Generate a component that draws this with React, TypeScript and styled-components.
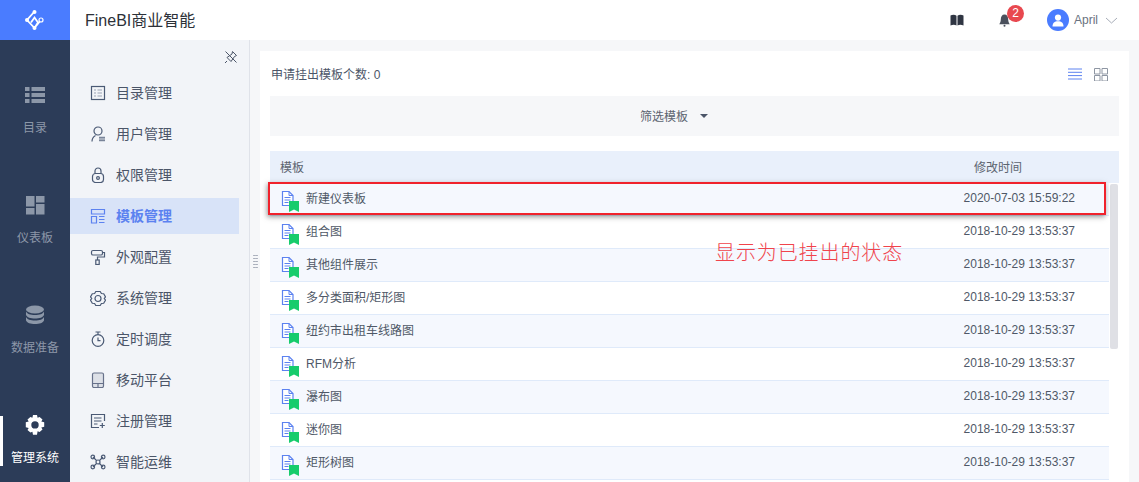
import React from 'react';
import styled, { createGlobalStyle } from 'styled-components';

const GlobalStyle = createGlobalStyle`
  html, body {
    margin: 0;
    padding: 0;
    width: 100%;
    height: 100%;
    overflow: hidden;
  }
  body {
    font-family: "Liberation Sans", "Noto Sans CJK SC", sans-serif;
    background: #f6f7f9;
  }
  * { box-sizing: border-box; }
`;

const Page = styled.div`
  width: 1139px;
  height: 482px;
  display: flex;
  flex-direction: column;
  overflow: hidden;
  background: #f6f7f9;
`;

const TopBar = styled.header`
  height: 40px;
  flex: none;
  display: flex;
  align-items: center;
  background: #fff;
`;

const Logo = styled.div`
  width: 70px;
  height: 40px;
  display: flex;
  align-items: center;
  justify-content: center;
  background: #4a7cff;
`;

const Title = styled.div`
  margin-left: 15px;
  padding-bottom: 2px;
  font-size: 16px;
  color: #2c3138;
`;

const TopRight = styled.div`
  margin-left: auto;
  display: flex;
  align-items: center;
  padding-right: 21px;
`;

const BookSlot = styled.div`
  display: flex;
  margin-right: 35px;
`;

const BellSlot = styled.div`
  position: relative;
  display: flex;
  margin-right: 37px;
`;

const Badge = styled.span`
  position: absolute;
  top: -9px;
  left: 8px;
  width: 17px;
  height: 17px;
  border-radius: 50%;
  background: #e8484f;
  color: #fff;
  font-size: 12px;
  line-height: 17px;
  text-align: center;
`;

const Avatar = styled.div`
  width: 22px;
  height: 22px;
  border-radius: 50%;
  background: #4a7cff;
  display: flex;
  align-items: center;
  justify-content: center;
`;

const UserName = styled.span`
  margin: 0 7px 0 5px;
  font-size: 12px;
  color: #6a7280;
`;

const Body = styled.div`
  flex: 1;
  display: flex;
  min-height: 0;
`;

const MainNav = styled.nav`
  width: 70px;
  flex: none;
  padding-top: 16px;
  background: #2c3c58;
`;

const MainNavItem = styled.div`
  height: 110px;
  display: flex;
  align-items: center;
`;

const MainNavInner = styled.div<{ $active?: boolean }>`
  position: relative;
  width: 70px;
  height: 52px;
  display: flex;
  flex-direction: column;
  align-items: center;
  justify-content: space-between;
  font-size: 12px;
  line-height: 17px;
  color: ${(p) => (p.$active ? '#fff' : '#8c97a8')};

  &::before {
    content: '';
    display: ${(p) => (p.$active ? 'block' : 'none')};
    position: absolute;
    left: 0;
    top: 1px;
    bottom: 1px;
    width: 3px;
    background: #fff;
  }
`;

const SubNav = styled.aside`
  width: 180px;
  flex: none;
  background: #f2f4f8;
  border-right: 1px solid #dfe2e9;
  display: flex;
  flex-direction: column;
`;

const PinRow = styled.div`
  height: 35px;
  flex: none;
  display: flex;
  justify-content: flex-end;
  align-items: flex-start;
  padding: 10px 11px 0 0;
`;

const SubNavItem = styled.div<{ $active?: boolean }>`
  width: 169px;
  height: 36px;
  flex: none;
  margin-bottom: 5px;
  display: flex;
  align-items: center;
  gap: 10px;
  padding-left: 20px;
  font-size: 14px;
  font-weight: ${(p) => (p.$active ? 700 : 400)};
  color: ${(p) => (p.$active ? '#5c82f0' : '#4b5568')};
  background: ${(p) => (p.$active ? '#d8e3f8' : 'transparent')};
`;

const SubNavLabel = styled.span`
  padding-bottom: 2px;
`;

const Resizer = styled.div`
  width: 10px;
  flex: none;
  display: flex;
  align-items: center;
  justify-content: center;
`;

const Grip = styled.div`
  width: 5px;
  height: 14px;
  margin-top: -1px;
  background-image: radial-gradient(circle, #a5abb8 0.8px, transparent 1px);
  background-size: 2.5px 3px;
`;

const Card = styled.main`
  position: relative;
  width: 869px;
  margin-top: 11px;
  flex: none;
  background: #fff;
  padding: 0 10px;
  overflow: hidden;
`;

const CardTop = styled.div`
  height: 45px;
  display: flex;
  align-items: center;
  padding: 2px 11px 0 1px;
  font-size: 12px;
  color: #4b5568;
`;

const CardTopLabel = styled.span`
  padding-bottom: 2px;
`;

const ViewIcons = styled.div`
  margin-left: auto;
  display: flex;
  gap: 12px;
`;

const FilterBar = styled.div`
  height: 40px;
  display: flex;
  align-items: center;
  justify-content: center;
  gap: 12px;
  background: #f6f7f9;
  font-size: 12px;
  color: #5c6470;
  padding: 0 41px 2px 0;
`;

const Caret = styled.span`
  width: 0;
  height: 0;
  margin-top: 2px;
  border-left: 4px solid transparent;
  border-right: 4px solid transparent;
  border-top: 4px solid #4b5568;
`;

const TableHead = styled.div`
  height: 32px;
  margin-top: 15px;
  display: flex;
  align-items: center;
  justify-content: space-between;
  padding: 0 97px 2px 10px;
  background: #e9f0fb;
  font-size: 12px;
  color: #5c6470;
`;

const TableBody = styled.div`
  display: flex;
`;

const Rows = styled.div`
  width: 839px;
  flex: none;
`;

const Row = styled.div<{ $striped: boolean }>`
  height: 33px;
  display: flex;
  align-items: center;
  padding: 0 34px 0 11px;
  border-bottom: 1px solid #dfeafa;
  background: ${(p) => (p.$striped ? '#f5f8fe' : '#fff')};
  font-size: 12px;
  color: #4f5867;
`;

const RowName = styled.span`
  margin-left: 5px;
  padding-bottom: 3px;
`;

const RowTime = styled.span`
  margin-left: auto;
  padding-bottom: 2px;
`;

const ScrollTrack = styled.div`
  width: 10px;
  flex: none;
  background: #fff;
`;

const ScrollThumb = styled.div`
  width: 8px;
  height: 165px;
  margin-left: 1px;
  margin-top: 1px;
  background: #dfe0e5;
  border-radius: 2px;
`;

const Highlight = styled.div`
  position: absolute;
  left: 8px;
  top: 131px;
  width: 838px;
  height: 33px;
  border: 2px solid #f0222c;
  box-shadow: -1px 2px 5px rgba(70, 70, 70, 0.55);
`;

const Note = styled.div`
  position: absolute;
  left: 455px;
  top: 186px;
  font-size: 20px;
  letter-spacing: 0.9px;
  font-weight: 300;
  color: #f0444c;
`;

const strokeProps = {
  fill: 'none',
  stroke: '#4b5a75',
  strokeWidth: 1.2,
};

const subIcons: Record<string, React.ReactNode> = {
  catalog: (
    <>
      <rect x="1.500" y="1.500" width="13" height="13" {...strokeProps} />
      <path d="M4 5h2M7.500 5h4.500M4 8h2M7.500 8h4.500M4 11h2M7.500 11h4.500" {...strokeProps} stroke="#9aa3b3" strokeWidth={1} />
    </>
  ),
  user: (
    <>
      <circle cx="8" cy="5" r="4" {...strokeProps} />
      <path d="M2 15.500c0-2.800 1.300-4.800 3.500-6" {...strokeProps} />
      <path d="M9 11.300h6M9 13h6M9 14.700h6" {...strokeProps} strokeWidth={0.9} />
    </>
  ),
  lock: (
    <>
      <rect x="2.500" y="6.500" width="11" height="9" rx="3" {...strokeProps} />
      <path d="M5 6.500V4a3 3 0 0 1 6 0v2.500" {...strokeProps} />
      <circle cx="8" cy="11" r="1.400" {...strokeProps} />
    </>
  ),
  template: (
    <path
      d="M1.500 1.500h13v4.500h-13zM1.500 8.500h5v6.500h-5zM9 8.500h5.500M9 11.500h5.500M9 14.500h5.500"
      fill="none"
      stroke="#5c82f0"
      strokeWidth="1.200"
    />
  ),
  roller: (
    <>
      <rect x="1.500" y="1.500" width="11" height="4.500" rx="1.500" {...strokeProps} />
      <path d="M12.500 3.500h2v4.500H7.500v3" {...strokeProps} />
      <rect x="5.800" y="11" width="3.400" height="4.500" {...strokeProps} />
    </>
  ),
  gear: (
    <>
      <path d="M5.800 1.500h4.400l1.200 2 2.300.2 1.800 3.200-1.200 1.600 1.200 1.600-1.800 3.200-2.300.2-1.200 2H5.800l-1.200-2-2.300-.2L.5 10.100l1.200-1.600L.5 6.900l1.800-3.200 2.300-.2z" {...strokeProps} />
      <circle cx="8" cy="8.500" r="3" {...strokeProps} />
    </>
  ),
  timer: (
    <>
      <circle cx="8" cy="9.500" r="5.800" {...strokeProps} />
      <path d="M5.500 1h5M8 1v2.500M8 6.500v3.200h2.500" {...strokeProps} />
    </>
  ),
  mobile: (
    <>
      <rect x="2.500" y="1" width="11" height="14.500" rx="1.500" fill="#dde0e7" stroke="#67718a" strokeWidth="1.200" />
      <path d="M2.500 11.500h11M8 12v3" stroke="#67718a" strokeWidth="1.200" fill="none" />
    </>
  ),
  register: (
    <>
      <path d="M14.500 8V1.500H1.500v13H9" {...strokeProps} />
      <path d="M4 5h7.500M4 8h7.500M4 11h3.500M12.300 10v5M9.800 12.500h5" {...strokeProps} />
    </>
  ),
  ops: (
    <>
      <path d="M3 3l10 10M13 3L3 13" {...strokeProps} />
      <circle cx="2.800" cy="3" r="1.800" {...strokeProps} />
      <circle cx="13.200" cy="3" r="1.800" {...strokeProps} />
      <circle cx="2.800" cy="13" r="1.800" {...strokeProps} />
      <circle cx="13.200" cy="13" r="1.800" {...strokeProps} />
      <circle cx="8" cy="8" r="2" fill="#f2f4f8" stroke="#4b5a75" strokeWidth="1.200" />
    </>
  ),
};

const subNav = [
  { key: 'catalog', label: '目录管理' },
  { key: 'user', label: '用户管理' },
  { key: 'lock', label: '权限管理' },
  { key: 'template', label: '模板管理', active: true },
  { key: 'roller', label: '外观配置' },
  { key: 'gear', label: '系统管理' },
  { key: 'timer', label: '定时调度' },
  { key: 'mobile', label: '移动平台' },
  { key: 'register', label: '注册管理' },
  { key: 'ops', label: '智能运维' },
];

const rows = [
  { name: '新建仪表板', time: '2020-07-03 15:59:22' },
  { name: '组合图', time: '2018-10-29 13:53:37' },
  { name: '其他组件展示', time: '2018-10-29 13:53:37' },
  { name: '多分类面积/矩形图', time: '2018-10-29 13:53:37' },
  { name: '纽约市出租车线路图', time: '2018-10-29 13:53:37' },
  { name: 'RFM分析', time: '2018-10-29 13:53:37' },
  { name: '瀑布图', time: '2018-10-29 13:53:37' },
  { name: '迷你图', time: '2018-10-29 13:53:37' },
  { name: '矩形树图', time: '2018-10-29 13:53:37' },
];

const Svg = ({ w, h, children }: { w: number; h: number; children: React.ReactNode }) => (
  <svg width={w} height={h} viewBox={`0 0 ${w} ${h}`} style={{ display: 'block', flex: 'none' }}>
    {children}
  </svg>
);

const FileIcon = () => (
  <Svg w={20} h={26}>
    <path d="M1.500 5.500h6.500l4 4v10H1.500z" fill="#fff" stroke="#5c82f0" strokeWidth="1.200" />
    <path d="M8 5.500v4h4M3.500 11.500h6M3.500 14h6M3.500 16.500h4" fill="none" stroke="#5c82f0" strokeWidth="1" />
    <path d="M8 15h10v11l-5-2.600L8 26z" fill="#17cc6c" />
  </Svg>
);

const App = () => {
  return (
    <Page>
      <GlobalStyle />
      <TopBar>
        <Logo>
          <Svg w={20} h={20}>
            <path d="M9.500 1.500L2 10l7.500 8L16 10M6 12.500L9.500 7.500 13 12.500 9.500 18" fill="none" stroke="#fff" strokeWidth="1.800" />
            <circle cx="9.500" cy="2" r="2" fill="#fff" />
            <circle cx="2" cy="10" r="2" fill="#fff" />
            <circle cx="9.500" cy="18" r="2" fill="#fff" />
            <circle cx="16" cy="10" r="2" fill="#4a7cff" stroke="#fff" strokeWidth="1.200" />
          </Svg>
        </Logo>
        <Title>FineBI商业智能</Title>
        <TopRight>
          <BookSlot>
            <Svg w={14} h={12}>
              <path d="M0.500 1.500C2.500 0.500 5 0.500 6.500 1.800V11.500C5 10.500 2.500 10.500 0.500 11.500z" fill="#2f3542" />
              <path d="M13.500 1.500C11.500 0.500 9 0.500 7.500 1.800V11.500C9 10.500 11.500 10.500 13.500 11.500z" fill="#2f3542" />
            </Svg>
          </BookSlot>
          <BellSlot>
            <Svg w={11} h={13}>
              <path d="M5.500 0.500C3 0.500 1.800 2.500 1.800 5.500 1.800 8 1 9 0.300 10.300H10.700C10 9 9.200 8 9.200 5.500 9.200 2.500 8 0.500 5.500 0.500z" fill="#4a505c" />
              <circle cx="5.500" cy="11.800" r="1" fill="#4a505c" />
            </Svg>
            <Badge>2</Badge>
          </BellSlot>
          <Avatar>
            <Svg w={12} h={13}>
              <circle cx="6" cy="3.600" r="3.100" fill="#fff" />
              <path d="M0.500 12.500C0.500 9 2.500 7.200 6 7.200S11.500 9 11.500 12.500z" fill="#fff" />
            </Svg>
          </Avatar>
          <UserName>April</UserName>
          <Svg w={13} h={7}>
            <path d="M1 1l5.500 5L12 1" fill="none" stroke="#a7adb8" strokeWidth="1" />
          </Svg>
        </TopRight>
      </TopBar>
      <Body>
        <MainNav>
          <MainNavItem>
            <MainNavInner>
              <Svg w={20} h={20}>
                <path d="M0 2h4.500v4H0zM6.500 2H20v4H6.500zM0 8h4.500v4H0zM6.500 8H20v4H6.500zM0 14h4.500v4H0zM6.500 14H20v4H6.500z" fill="#8c97a8" />
              </Svg>
              <span>目录</span>
            </MainNavInner>
          </MainNavItem>
          <MainNavItem>
            <MainNavInner>
              <Svg w={20} h={20}>
                <path d="M1 1h8.500v10.500H1zM11 1h8.500v6.500H11zM1 13h8.500v6.500H1zM11 9h8.500v10.500H11z" fill="#8c97a8" />
              </Svg>
              <span>仪表板</span>
            </MainNavInner>
          </MainNavItem>
          <MainNavItem>
            <MainNavInner>
              <Svg w={20} h={20}>
                <ellipse cx="10" cy="4.500" rx="9" ry="4" fill="#8c97a8" />
                <path d="M1 6.500c1 2.500 4.500 3.500 9 3.500s8-1 9-3.500v3.500c-1 2.500-4.500 3.500-9 3.500s-8-1-9-3.500z" fill="#8c97a8" />
                <path d="M1 12c1 2.500 4.500 3.500 9 3.500s8-1 9-3.500v3.500c-1 2.500-4.500 3.500-9 3.500s-8-1-9-3.500z" fill="#8c97a8" />
              </Svg>
              <span>数据准备</span>
            </MainNavInner>
          </MainNavItem>
          <MainNavItem>
            <MainNavInner $active>
              <Svg w={20} h={20}>
                <path
                  fillRule="evenodd"
                  d="M8 0h4l.6 2.800 2-.9 2.900 2.500-1.200 2.200 2.900.6v4.600l-2.900.6 1.200 2.200-2.900 2.500-2-.9L12 19.800H8l-.6-3.100-2 .9-2.900-2.500 1.200-2.200L.8 12.300V7.200l2.900-.6-1.200-2.200 2.900-2.500 2 .9zM10 6.200a3.700 3.700 0 1 0 0 7.400 3.700 3.700 0 0 0 0-7.400z"
                  fill="#fff"
                />
              </Svg>
              <span>管理系统</span>
            </MainNavInner>
          </MainNavItem>
        </MainNav>
        <SubNav>
          <PinRow>
            <Svg w={14} h={14}>
              <path d="M8.500 1.500l4 4-2 1-3.500 5-4-4 5-3.500zM3 11l-2 2M1.500 1.500l11 11" fill="none" stroke="#4b5568" strokeWidth="1" />
            </Svg>
          </PinRow>
          {subNav.map((item) => (
            <SubNavItem key={item.key} $active={item.active}>
              <Svg w={16} h={16}>{subIcons[item.key]}</Svg>
              <SubNavLabel>{item.label}</SubNavLabel>
            </SubNavItem>
          ))}
        </SubNav>
        <Resizer>
          <Grip />
        </Resizer>
        <Card>
          <CardTop>
            <CardTopLabel>申请挂出模板个数: 0</CardTopLabel>
            <ViewIcons>
              <Svg w={14} h={12}>
                <path d="M0 1h14M0 4.300h14M0 7.600h14M0 11h14" stroke="#5c82f0" strokeWidth="1" fill="none" />
              </Svg>
              <Svg w={14} h={13}>
                <path d="M.5.500h5.500v5.500H.5zM8 .5h5.500v5.500H8zM.5 7.500h5.500V13H.5zM8 7.500h5.500V13H8z" stroke="#8e96a3" strokeWidth="1" fill="none" />
              </Svg>
            </ViewIcons>
          </CardTop>
          <FilterBar>
            <span>筛选模板</span>
            <Caret />
          </FilterBar>
          <TableHead>
            <span>模板</span>
            <span>修改时间</span>
          </TableHead>
          <TableBody>
            <Rows>
              {rows.map((row, i) => (
                <Row key={row.name} $striped={i % 2 === 0}>
                  <FileIcon />
                  <RowName>{row.name}</RowName>
                  <RowTime>{row.time}</RowTime>
                </Row>
              ))}
            </Rows>
            <ScrollTrack>
              <ScrollThumb />
            </ScrollTrack>
          </TableBody>
          <Highlight />
          <Note>显示为已挂出的状态</Note>
        </Card>
      </Body>
    </Page>
  );
};

export default App;
